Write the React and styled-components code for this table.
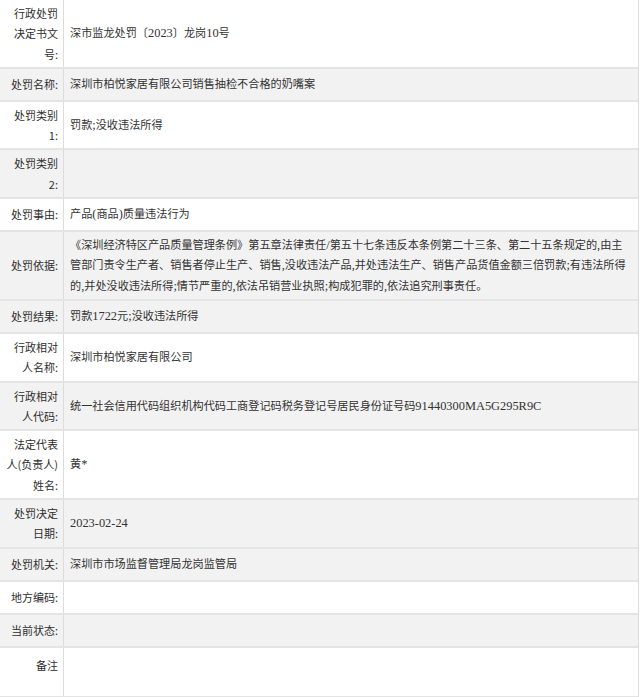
import React from "react";
import styled, { createGlobalStyle } from "styled-components";

const Global = createGlobalStyle`
  html, body { margin: 0; padding: 0; background: #fff; }
  body { font-family: "Noto Sans CJK SC", sans-serif; }
`;

const Table = styled.div`
  width: 638px;
  border-right: 1px solid #dcdcdc;
  color: #333;
`;

const Row = styled.div`
  display: grid;
  grid-template-columns: 64px 1fr;
  background: ${(p) => (p.$shade ? "#f2f2f2" : "#fff")};
  border-bottom: 2px solid #e4e4e4;
`;

const Label = styled.div`
  display: flex;
  flex-direction: column;
  justify-content: ${(p) => (p.$top ? "flex-start" : "center")};
  align-items: flex-end;
  padding: ${(p) => (p.$top ? "7px" : "3px")} 5px 3px 0;
  min-height: 25px;
  border-right: 1px solid #dcdcdc;
  font-family: "Noto Sans CJK SC", sans-serif;
  font-size: 11px;
  line-height: 20.3px;
  color: #2e2e2e;
`;

const LabelLine = styled.span`
  white-space: nowrap;
`;

const Value = styled.div`
  display: flex;
  align-items: center;
  padding: 3px 8px 3px 6px;
  min-height: ${(p) => p.$min || 25}px;
  font-family: "Liberation Serif", "Noto Sans CJK SC", serif;
  font-size: 11.15px;
  line-height: 20.3px;
  color: #333;
`;

const Latin = styled.span`
  font-family: "Liberation Serif", serif;
  font-size: 12.4px;
`;

const rows = [
  { label: ["行政处罚", "决定书文", "号:"], value: "深市监龙处罚〔2023〕龙岗10号" },
  { label: ["处罚名称:"], value: "深圳市柏悦家居有限公司销售抽检不合格的奶嘴案", shade: true },
  { label: ["处罚类别", "1:"], value: "罚款;没收违法所得" },
  { label: ["处罚类别", "2:"], value: "", shade: true },
  { label: ["处罚事由:"], value: "产品(商品)质量违法行为" },
  {
    label: ["处罚依据:"],
    value:
      "《深圳经济特区产品质量管理条例》第五章法律责任/第五十七条违反本条例第二十三条、第二十五条规定的,由主管部门责令生产者、销售者停止生产、销售,没收违法产品,并处违法生产、销售产品货值金额三倍罚款;有违法所得的,并处没收违法所得;情节严重的,依法吊销营业执照;构成犯罪的,依法追究刑事责任。",
    shade: true,
  },
  { label: ["处罚结果:"], value: "罚款1722元;没收违法所得", shade: true },
  { label: ["行政相对", "人名称:"], value: "深圳市柏悦家居有限公司" },
  {
    label: ["行政相对", "人代码:"],
    value: "统一社会信用代码组织机构代码工商登记码税务登记号居民身份证号码91440300MA5G295R9C",
    shade: true,
  },
  { label: ["法定代表", "人(负责人)", "姓名:"], value: "黄*" },
  { label: ["处罚决定", "日期:"], value: "2023-02-24", shade: true },
  { label: ["处罚机关:"], value: "深圳市市场监督管理局龙岗监管局", shade: true },
  { label: ["地方编码:"], value: "" },
  { label: ["当前状态:"], value: "", shade: true },
  { label: ["备注"], value: "", top: true, min: 42 },
];

function Text({ children }) {
  const parts = children.split(/([\x20-\x7E]+)/).filter(Boolean);
  return (
    <span>
      {parts.map((p, i) =>
        /^[\x20-\x7E]+$/.test(p) ? <Latin key={i}>{p}</Latin> : <React.Fragment key={i}>{p}</React.Fragment>
      )}
    </span>
  );
}

export default function App() {
  return (
    <>
      <Global />
      <Table>
        {rows.map((r, i) => (
          <Row key={i} $shade={r.shade}>
            <Label $top={r.top}>
              {r.label.map((l, j) => (
                <LabelLine key={j}>{l}</LabelLine>
              ))}
            </Label>
            <Value $min={r.min}>
              <Text>{r.value}</Text>
            </Value>
          </Row>
        ))}
      </Table>
    </>
  );
}
